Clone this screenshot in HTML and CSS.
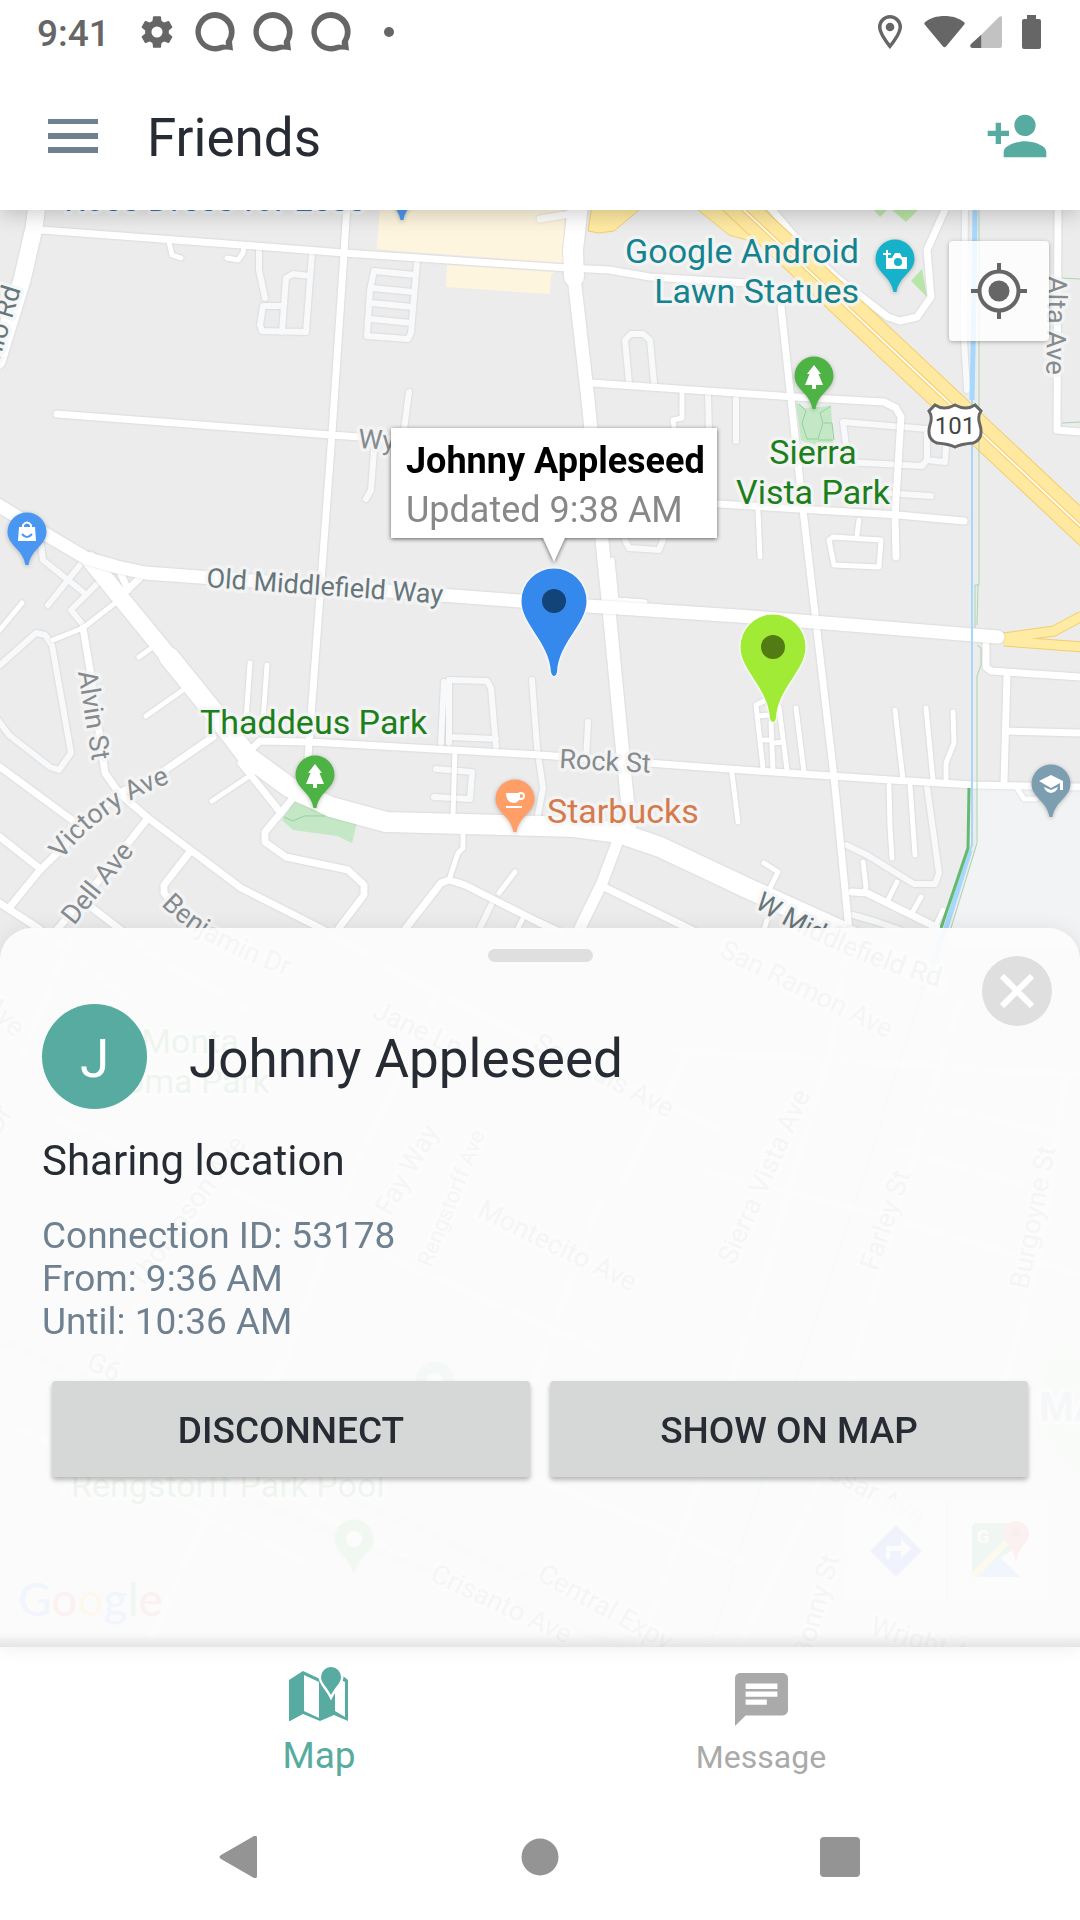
FILE: index.html
```html
<!DOCTYPE html>
<html lang="en">
<head>
<meta charset="utf-8">
<meta name="viewport" content="width=device-width, initial-scale=1">
<title>Friends</title>
<link rel="stylesheet" href="styles.css">
</head>
<body>
<div class="screen">
  <div class="status">
    <span class="clock">9:41</span>
    <svg class="gear" viewBox="0 0 24 24" width="38" height="38"><path d="M19.43 12.98c.04-.32.07-.64.07-.98s-.03-.66-.07-.98l2.11-1.65c.19-.15.24-.42.12-.64l-2-3.46c-.12-.22-.39-.3-.61-.22l-2.49 1c-.52-.4-1.08-.73-1.69-.98l-.38-2.65A.49.49 0 0 0 14 2h-4c-.25 0-.46.18-.49.42l-.38 2.65c-.61.25-1.17.59-1.69.98l-2.49-1c-.23-.09-.49 0-.61.22l-2 3.46c-.13.22-.07.49.12.64l2.11 1.65c-.04.32-.07.65-.07.98s.03.66.07.98l-2.11 1.65c-.19.15-.24.42-.12.64l2 3.46c.12.22.39.3.61.22l2.49-1c.52.4 1.08.73 1.69.98l.38 2.65c.03.24.24.42.49.42h4c.25 0 .46-.18.49-.42l.38-2.65c.61-.25 1.17-.59 1.69-.98l2.49 1c.23.09.49 0 .61-.22l2-3.46c.12-.22.07-.49-.12-.64l-2.11-1.65zM12 15.5a3.5 3.5 0 1 1 0-7 3.5 3.5 0 0 1 0 7z"/></svg>
    <span class="rings">
      <svg viewBox="0 0 40 40" width="40" height="40"><path fill-rule="evenodd" d="M20 0a19.700 19.700 0 1 0 6 38.500q4-2 12 0l-1-9a19.700 19.700 0 0 0-17-29.500zM20 6a14 14 0 0 1 12 21q-2 2-1 6-3-1-6 0A14 14 0 1 1 20 6z"/></svg>
      <svg viewBox="0 0 40 40" width="40" height="40"><path fill-rule="evenodd" d="M20 0a19.700 19.700 0 1 0 6 38.500q4-2 12 0l-1-9a19.700 19.700 0 0 0-17-29.500zM20 6a14 14 0 0 1 12 21q-2 2-1 6-3-1-6 0A14 14 0 1 1 20 6z"/></svg>
      <svg viewBox="0 0 40 40" width="40" height="40"><path fill-rule="evenodd" d="M20 0a19.700 19.700 0 1 0 6 38.500q4-2 12 0l-1-9a19.700 19.700 0 0 0-17-29.500zM20 6a14 14 0 0 1 12 21q-2 2-1 6-3-1-6 0A14 14 0 1 1 20 6z"/></svg>
    </span>
    <svg viewBox="0 0 10 10" width="10" height="10"><circle cx="5" cy="5" r="5"/></svg>
    <span class="signals">
      <svg viewBox="0 0 24 34" width="24" height="34"><path fill-rule="evenodd" d="M12 0A12 12 0 0 0 0 12c0 8 12 22 12 22s12-14 12-22A12 12 0 0 0 12 0zm0 3.500A8.500 8.500 0 0 1 20.500 12c0 5-5 12-8.500 16.500C8.500 24 3.500 17 3.500 12A8.500 8.500 0 0 1 12 3.500z"/><circle cx="12" cy="12" r="4.300"/></svg>
      <svg class="wifi" viewBox="0 0 41 34" width="41" height="34"><path d="M.6 7.500C6 3 13 1 20.500 1s14.500 2 20 6.500q.5 1-.2 2L22 31.500q-1.500 1.500-3 0L.7 9.500q-.7-1-.1-2z"/></svg>
      <svg class="cell" viewBox="0 0 32 32" width="32" height="32"><path fill="#c2c2c2" d="M11 19 28.500 1.500Q32-1 32 2v27q0 3-2 3H11z"/><path d="M11.200 18.800V32H2q-3-1-1-4z"/></svg>
      <svg viewBox="0 0 19 34" width="19" height="34"><path d="M5 0h9v4h3q2 0 2 2v26q0 2-2 2H2q-2 0-2-2V6q0-2 2-2h3z"/></svg>
    </span>
  </div>

  <header class="appbar">
    <button class="icon-button" aria-label="Menu"><svg viewBox="0 0 50 34" width="50" height="34"><path d="M0 0h50v5H0zM0 14h50v6H0zM0 28h50v6H0z"/></svg></button>
    <h1>Friends</h1>
    <button class="icon-button add" aria-label="Add friend"><svg viewBox="0 0 24 24" width="64" height="64"><path d="M15 12a4 4 0 1 0 0-8 4 4 0 0 0 0 8zm-9-2V7H4v3H1v2h3v3h2v-3h3v-2H6zm9 4c-2.670 0-8 1.340-8 4v2h16v-2c0-2.660-5.330-4-8-4z"/></svg></button>
  </header>

  <main class="map">
    <svg class="canvas" viewBox="0 210 1080 1437" preserveAspectRatio="xMidYMid slice">
      <defs>
        <path id="poi" d="M0-19.500A19.500 19.500 0 0 0-19.500 0C-19.500 13-4 17-1.500 33h3C4 17 19.500 13 19.500 0A19.500 19.500 0 0 0 0-19.500z"/>
        <path id="marker" d="M0-32.500A32.500 32.500 0 0 0-32.500 0C-32.500 24-5 40-3 71Q-2 75 0 75T3 71C5 40 32.500 24 32.500 0A32.500 32.500 0 0 0 0-32.500z"/>
        <path id="tree" d="M0-11 7-2H4.500L9 9H2v4h-4V9h-7l4.500-11H-7z"/>
        <path id="victory" d="M62 860Q100 808 170 783"/>
        <path id="benjamin" d="M161 905Q203 949 300 980"/>
        <path id="middlefield" d="M754 907Q838 960 960 993"/>
      </defs>

      <rect class="land" y="200" width="1080" height="1460"/>
      <path fill="#f1f3f4" d="M977 788H1080V950H945L976 850z"/>
      <path class="block" d="M380 205 377 249 411 252 564 263 562 250 565 225 561 205zM447 265 446 287 550 294 551 275 555 272z"/>
      <path class="grass" d="M874 210H887L880 217zM892 210H918L906 222zM911 281 922 269 927 297z"/>
      <path class="park" d="M796 402 805 408 831 406 834 457 801 440zM294 802 357 823 352 843 337 836 293 830 282 820z"/>
      <path class="trail" d="M799 404 806 411 802 423 807 439H818L823 423 820 413 831 406M824 423H832L834 440M818 440H833M284 817 293 821 304 816H325"/>

      <g class="lots">
        <path d="M259 250V270L265 298M312 253 306 332 262 331 260 325 263 306H284M282 332 286 278 293 274 310 276"/>
        <path d="M417 262 411 333 408 339 367 336 370 290 374 271 415 275M372 288 413 292M371 303 413 307M371 319 411 323M409 392 404 430M374 450 371 490 366 499"/>
        <path d="M629 383 625 340 631 334H643L650 340 654 383M708 395 709 430M736 397V441M927 460 922 466 846 462M846 445 843 422 927 429V460L945 462 946 447M884 493 931 496M625 540 629 548 659 550 663 540M965 205 964 340 967 390"/>
        <path d="M41 545 43 560 83 592M84 560 48 605M96 585 71 610 83 625M0 665 36 633 45 635 52 645 71 753 59 770 50 767 9 735-2 720"/>
        <path d="M444 682 441 743M449 743V680L487 681 491 688 496 747M451 737 496 739M436 769 472 772 470 799 434 797M532 680 537 747 543 788 538 815M588 722 586 760M492 903 480 928"/>
        <path d="M927 787 939 873 935 884H914L867 855 846 845M853 915 877 922 900 930"/>
      </g>

      <g class="roads">
        <path class="w5" d="M169 242 172 255 181 258M244 247 243 253 238 260 227 258M682 393V418L673 420 674 428M758 510 760 557M859 520 857 535M833 537 881 540 879 567 834 565 829 540zM612 560 616 600 645 602M22 603-2 632M119 600 83 628 53 640M153 647 139 657M183 690 146 716M248 777 212 801M250 663 246 720M267 665 263 720"/>
        <path class="w5" d="M766 700 756 705 763 768M771 723 773 770M779 707 787 770M796 708 804 772M759 716 769 715M762 740H771M774 743 783 742M895 710 903 780M926 708 933 780M953 712 954 743 946 763V782M889 785 890 827 892 858M910 785 915 855M732 773 738 822M863 862 866 887 864 893M897 882 888 900M921 897 912 913M943 910 936 925M764 863 778 872 769 890M767 920 764 930M1017 788 1024 799H1036M455 750 453 815M463 833V848L458 853 449 880M515 872 499 893M522 920 517 930"/>
        <path class="w7" d="M41 230 255 246 344 253 568 268 609 270 650 277 747 283M347 205 344 253 332 433 308 757M57 414 331 435 521 448M719 504 898 515 964 521M540 219 570 214"/>
        <path class="w7" d="M592 383 795 397 884 402 896 408 901 417 895 515 896 557M781 307 803 510 834 777 850 940M768 205 795 237 836 277 888 317 900 321 917 317 931 297 927 250 947 205M1058 205 1057 430 1080 432"/>
        <path class="w7" d="M245 755 260 741 310 742 540 755 729 769 891 780 974 785 1080 787M986 640V667L991 671 1080 677M1007 675 1004 782M1007 731 1080 733M852 892 867 893 950 934M604 887 700 934M538 922 560 932"/>
        <path class="w7" d="M83 628 90 670 105 773 119 793 148 818 241 888 320 928 420 985 560 1055 720 1130M213 737 155 777 119 793 40 870 9 908M0 767 72 820M0 837 38 867M-2 902 38 928 130 1000M148 818 91 890 55 932M91 907 160 960 250 1010M189 853 164 885V893L200 935M241 763 281 813M293 798 265 832V842L286 857 348 870 364 885V895L339 928M449 880 441 883 406 928M449 880 465 885 540 923M122 595 145 573M118 567 128 590"/>
        <path class="w11" d="M617 843 602 883 580 928"/>
        <path class="w13" d="M574 277 588 400 604 560 609 610 626 787 630 825"/>
        <path class="w17" d="M37 205 34 228 22 280-3 361M90 560 120 597 169 657"/>
        <path class="w20" d="M578 205 573 250 574 277M169 657 220 720 248 757 289 787 331 807 386 822 540 826 574 827 619 833 660 847 747 888 840 930 940 985"/>
      </g>

      <path class="ramp" d="M592 205 588 231 599 233 614 231 645 205zM692 205 729 235 765 245 750 205z"/>
      <path class="ramp-edge" d="M1082 616 1054 631 1004 638M1004 641 1082 647"/>
      <path class="ramp-road" d="M1082 616 1054 631 1004 638M1004 641 1082 647"/>
      <g class="roads"><path class="w13" d="M-2 505 52 538 86 558 117 567 145 573 520 601 588 606 753 617 998 637"/></g>
      <path class="freeway-edge" d="M731 198 1092 537"/>
      <path class="freeway" d="M731 198 1092 537"/>
      <path class="median-edge" d="M731 198 1092 537"/>
      <path class="median" d="M731 198 1092 537"/>

      <path class="creek wide" d="M975 205 974 300 972 400M970 850 946 928 922 990"/>
      <path class="creek" d="M972 400V845L970 850M922 990 871 1153 815 1320 709 1647"/>
      <path class="levee" d="M979 205V585H975V628M978 585 977 625M977 645 981 648V665L977 676V843L951 928M1062 278 1080 279M1062 423 1080 422"/>
      <path class="levee strong" d="M969 788 968 848 941 928"/>

      <g class="faded-roads">
        <path d="M70 940 20 1060M60 1120 350 1240 600 1350M140 1300 60 1500M440 990 350 1180 250 1460M850 930 830 1050 760 1290 700 1480 640 1647M700 1170 860 1210 1000 1250 1080 1275M960 1000 900 1200 820 1480 740 1647M930 1105 1060 1135M900 1150 1040 1190M670 1050 1080 1075M1065 1080 1040 1250 1000 1400M150 1640 280 1360M20 1430 300 1560M260 1480 480 1600M540 1480 740 1560M600 1200 520 1420M690 1050 620 1190"/>
        <path class="railway" d="M0 1340 400 1520 700 1660M250 1500 620 1647"/>
      </g>
      <path fill="#cdeac6" d="M1050 1353H1080V1480L1035 1430z"/>

      <g class="place">
        <text class="shop" x="64" y="211">Ross Dress for Less</text>
        <text class="attraction" x="859" y="263" text-anchor="end">Google Android</text>
        <text class="attraction" x="859" y="303" text-anchor="end">Lawn Statues</text>
        <text class="green" x="813" y="464" text-anchor="middle">Sierra</text>
        <text class="green" x="813" y="504" text-anchor="middle">Vista Park</text>
        <text class="green" x="200" y="734">Thaddeus Park</text>
        <text class="cafe" x="547" y="823">Starbucks</text>
        <text class="green" x="190" y="1053" text-anchor="middle">Monta</text>
        <text class="green" x="188" y="1093" text-anchor="middle">Loma Park</text>
        <text class="green" x="71" y="1497">Rengstorff Park Pool</text>
      </g>
      <g class="street major">
        <text transform="translate(206 587) rotate(4)">Old Middlefield Way</text>
        <text><textPath href="#middlefield">W Middlefield Rd</textPath></text>
        <text transform="translate(21 289) rotate(-73)" text-anchor="end">San Antonio Rd</text>
      </g>
      <g class="street">
        <text transform="translate(358 448) rotate(3)">Wyandotte St</text>
        <text transform="translate(559 768) rotate(3)">Rock St</text>
        <text transform="translate(78 672) rotate(81)">Alvin St</text>
        <text transform="translate(1048 276) rotate(91)">Alta Ave</text>
        <text><textPath href="#victory">Victory Ave</textPath></text>
        <text transform="translate(74 926) rotate(-51)">Dell Ave</text>
        <text><textPath href="#benjamin">Benjamin Dr</textPath></text>
        <text transform="translate(371 1017) rotate(25)">Jane Ln</text>
        <text transform="translate(141 1290) rotate(-54)">Thompson Ave</text>
        <text transform="translate(390 1217) rotate(-60)">Fay Way</text>
        <text class="minor" transform="translate(431 1268) rotate(-68)">Rengstorff Ave</text>
        <text transform="translate(476 1216) rotate(26)">Montecito Ave</text>
        <text transform="translate(668 1118) rotate(27)" text-anchor="end">San Luis Ave</text>
        <text transform="translate(718 956) rotate(26)">San Ramon Ave</text>
        <text transform="translate(734 1266) rotate(-66)">Sierra Vista Ave</text>
        <text transform="translate(877 1272) rotate(-71)">Farley St</text>
        <text transform="translate(1028 1290) rotate(-79)">Burgoyne St</text>
        <text transform="translate(14 1038) rotate(46)" text-anchor="end">Laura Ave</text>
        <text transform="translate(13 1112) rotate(-60)" text-anchor="end">Emmons Dr</text>
        <text transform="translate(85 1368) rotate(25)">G6</text>
        <text transform="translate(429 1580) rotate(25)">Crisanto Ave</text>
        <text transform="translate(536 1579) rotate(29)">Central Expy</text>
        <text transform="translate(918 1526) rotate(28)" text-anchor="end">Vassar Ave</text>
        <text transform="translate(810 1660) rotate(-74)">Bonny St</text>
        <text transform="translate(869 1634) rotate(17)">Wright Ave</text>
        <text class="town" x="1039" y="1421">MA</text>
      </g>

      <g transform="translate(955 426)">
        <path class="shield" d="M-20-21Q-11-15 0-21 11-15 20-21L26-15Q22-9 25-1 29 13 18 17 6 18 0 21-6 18-18 17-29 13-25-1-22-9-26-15z"/>
        <text class="route" y="8" text-anchor="middle">101</text>
      </g>

      <g class="pois">
        <use href="#poi" x="402" y="187" fill="#4a97f2"/>
        <g transform="translate(27 532)"><use href="#poi" fill="#4a97f2"/><path class="glyph" d="M-8-5H8L9 9H-9z"/><path fill="none" stroke="#fff" stroke-width="2" d="M-4-5V-7Q0-12 4-7V-5"/><path fill="none" stroke="#4a97f2" stroke-width="2" d="M-5 2Q0 8 5 2"/></g>
        <g transform="translate(895 259)"><use href="#poi" fill="#16b2c9"/><path class="glyph" d="M-9-1H-3L0-6H5L7-2H12V10H-9zM-9-9h2v3h3v2h-3v3h-2v-3h-3v-2h3z"/><circle cx="3" cy="3" r="4" fill="#16b2c9"/></g>
        <g transform="translate(814 376)"><use href="#poi" fill="#4eb345"/><use class="glyph" href="#tree"/></g>
        <g transform="translate(315 775)"><use href="#poi" fill="#4eb345"/><use class="glyph" href="#tree"/></g>
        <g transform="translate(515 799)"><use href="#poi" fill="#ff9e67"/><path class="glyph" d="M-9-6H5V-2Q4 4-2 4-9 3-9-6zM-9 7H7V9H-9z"/><circle cx="6" cy="-3" r="3" fill="none" stroke="#fff" stroke-width="2"/></g>
        <g transform="translate(1051 784)"><use href="#poi" fill="#7c9eb0"/><path class="glyph" d="M-12-3 0-9 12-3V6H9V-1L0 4zM-7 3 0 6 7 3Q6 8 0 9-6 8-7 3z"/></g>
        <g transform="translate(435 1381)"><use href="#poi" fill="#7fb9a8"/><circle r="8" fill="#fff"/></g>
        <g transform="translate(354 1539)"><use href="#poi" fill="#4eb345"/><circle r="8" fill="#fff"/></g>
      </g>

      <g class="logo"><text x="18" y="1616"><tspan fill="#4285f4">G</tspan><tspan fill="#ea4335">o</tspan><tspan fill="#fbbc05">o</tspan><tspan fill="#4285f4">g</tspan><tspan fill="#34a853">l</tspan><tspan fill="#ea4335">e</tspan></text></g>
      <g>
        <rect x="843" y="1499" width="206" height="101" rx="4" fill="#fff" opacity=".7"/>
        <path stroke="#ddd" stroke-width="2" d="M947 1500V1599"/>
        <path fill="#3f6ff0" d="M896 1525 922 1551 896 1577 870 1551z"/>
        <path fill="#fff" d="M886 1559V1546H901V1539L911 1549 901 1558V1551H890V1559z"/>
        <path fill="#34a853" d="M975 1523H1020V1545L972 1577V1526z"/>
        <path fill="#fbc02d" d="M972 1572 1006 1538 1010 1543 977 1577H972z"/>
        <path fill="#4285f4" d="M977 1577 999 1556 1020 1577z"/>
        <path fill="#ea4335" d="M1016 1521a13 13 0 0 1 13 13c0 8-11 13-13 29-2-16-13-21-13-29a13 13 0 0 1 13-13z"/>
        <circle cx="1016" cy="1533" r="4" fill="#96261d"/>
        <text class="badge" x="977" y="1543">G</text>
      </g>

      <g class="markers">
        <g transform="translate(554 601)"><use href="#marker" fill="#3689ec"/><circle r="12" fill="#124479"/></g>
        <g transform="translate(773 647)"><use href="#marker" fill="#a1eb36"/><circle r="12" fill="#527c13"/></g>
      </g>
      <g class="callout">
        <path d="M391 428H717V538H565L554 562 543 538H391z"/>
        <text class="who" x="406" y="473">Johnny Appleseed</text>
        <text class="when" x="406" y="522">Updated 9:38 AM</text>
      </g>
    </svg>

    <button class="locate" aria-label="My location"><svg viewBox="0 0 56 56" width="56" height="56"><circle cx="28" cy="28" r="19.500" fill="none" stroke="#666" stroke-width="4"/><circle cx="28" cy="28" r="10.500" fill="#666"/><path stroke="#666" stroke-width="4" d="M28 0V9M28 47V56M0 28H9M47 28H56"/></svg></button>

    <section class="sheet">
      <div class="handle"></div>
      <button class="close" aria-label="Close"><svg viewBox="0 0 34 34" width="34" height="34"><path stroke="#fff" stroke-width="6" d="M2 2 32 32M32 2 2 32"/></svg></button>
      <div class="person"><span class="avatar">J</span><h2>Johnny Appleseed</h2></div>
      <p class="state">Sharing location</p>
      <p class="details">Connection ID: 53178<br>From: 9:36 AM<br>Until: 10:36 AM</p>
      <div class="actions"><button>DISCONNECT</button><button>SHOW ON MAP</button></div>
    </section>
  </main>

  <nav class="tabs">
    <a class="tab active" href="#map"><svg viewBox="0 0 60 54" width="60" height="54"><path fill-rule="evenodd" d="M0 13 14 4 31 12 45 5 54 9 59 13V54L45 48 31 54 14 47 1 54H0zM15 8V44L30 51V15zM46 22V44L56 50V15L50 12z"/><path class="drop" d="M42 0A10 10 0 0 1 52 10C52 16 46 20 42 28 38 20 32 16 32 10A10 10 0 0 1 42 0z"/></svg><span>Map</span></a>
    <a class="tab" href="#message"><svg viewBox="2 2 20 20" width="53" height="53"><path d="M20 2H4c-1.100 0-1.990.9-1.990 2L2 22l4-4h14c1.100 0 2-.9 2-2V4c0-1.100-.9-2-2-2zM6 6h12v2H6zm0 3h12v2H6zm8 5H6v-2h8z"/></svg><span>Message</span></a>
  </nav>
  <div class="system">
    <button aria-label="Back"><svg viewBox="0 0 42 42" width="42" height="42"><path d="M35 0q3-1 3 2v38q0 3-3 2L2 23q-3-2 0-4z"/></svg></button>
    <button aria-label="Home"><svg viewBox="0 0 38 38" width="38" height="38"><circle cx="19" cy="19" r="18.500"/></svg></button>
    <button aria-label="Overview"><svg viewBox="0 0 40 40" width="40" height="40"><rect width="40" height="40" rx="4"/></svg></button>
  </div>
</div>
</body>
</html>
```
FILE: styles.css
```css
* { box-sizing: border-box; }

body {
  margin: 0;
  background: #fff;
  color: #272b33;
  font-family: Roboto, "Liberation Sans", sans-serif;
}

h1, h2, p { margin: 0; font-weight: 400; }

button {
  border: 0;
  padding: 0;
  background: none;
  font: inherit;
  color: inherit;
}

svg { display: block; flex: none; }

.screen {
  display: flex;
  flex-direction: column;
  min-height: 100vh;
}

/* Status bar */
.status {
  display: flex;
  align-items: center;
  height: 64px;
  padding: 0 39px 0 37px;
  color: #666;
  fill: #666;
}
.clock { padding-top: 2px; font-size: 37px; font-weight: 500; }
.gear { margin-left: 28px; }
.rings { display: flex; gap: 18px; margin: 0 33px 0 19px; }
.signals { display: flex; align-items: center; margin-left: auto; }
.wifi { margin: 0 5px 0 22px; }
.cell { margin-right: 20px; }

/* App bar */
.appbar {
  display: flex;
  align-items: center;
  height: 146px;
  padding: 0 31px 2px 48px;
  position: relative;
  z-index: 1;
  background: #fff;
  box-shadow: 0 4px 20px rgba(0, 0, 0, .2);
  clip-path: inset(0 0 -30px 0);
}
.appbar h1, .person h2 { padding-top: 4px; font-size: 53px; }
.appbar h1 { margin-left: 49px; }
.icon-button { fill: #6f8190; }
.add { margin-left: auto; fill: #57aba0; }

/* Map */
.map { flex: 1; display: grid; }
.map > * { grid-area: 1 / 1; }
.canvas { width: 100%; height: 100%; }
.land { fill: #ececec; }
.block { fill: #fdf5de; }
.grass { fill: #b9e6a8; }
.park { fill: #c4e8c5; }
.trail { fill: none; stroke: #96cf9d; stroke-width: 1; }
.roads, .lots, .faded-roads {
  fill: none;
  stroke: #fff;
  stroke-linecap: round;
  stroke-linejoin: round;
  filter: drop-shadow(0 0 1px rgba(0, 0, 0, .14));
}
.lots { stroke: #f8f9fb; stroke-width: 6; }
.faded-roads { stroke-width: 7; }
.railway { stroke: #ddd; }
.w5 { stroke-width: 5; }
.w7 { stroke-width: 7; }
.w11 { stroke-width: 11; }
.w13 { stroke-width: 13; }
.w17 { stroke-width: 17; }
.w20 { stroke-width: 20; }
.ramp { fill: #ffeba3; stroke: #f3cd6c; }
.ramp-edge, .ramp-road, .freeway, .freeway-edge, .median, .median-edge { fill: none; }
.ramp-edge { stroke: #f3cd6c; stroke-width: 11; stroke-linejoin: round; }
.ramp-road { stroke: #ffeba3; stroke-width: 9; stroke-linejoin: round; }
.freeway-edge { stroke: #f3cd6c; stroke-width: 30; }
.freeway { stroke: #ffe9a0; stroke-width: 28; }
.median-edge { stroke: #f3cd6c; stroke-width: 4; }
.median { stroke: #fffbef; stroke-width: 2; }
.creek { fill: none; stroke: #a6d8fd; stroke-width: 2; }
.wide { stroke-width: 5; }
.levee { fill: none; stroke: #a9d5b0; stroke-width: 1; }
.strong { stroke: #63ba70; stroke-width: 3; }

.place text, .street text {
  paint-order: stroke;
  stroke: rgba(245, 245, 245, .8);
  stroke-width: 7px;
  stroke-linejoin: round;
}
.place { font-size: 34px; }
.shop { fill: #2f6fcf; }
.attraction { fill: #12838f; }
.green { fill: #1b7f1b; }
.cafe { fill: #d57a4b; }
.street { font-size: 27px; fill: #858b8f; }
.major { fill: #66767b; }
.street .minor { font-size: 22px; }
.street .town { font-size: 40px; font-weight: 700; fill: #8fa3b5; }
.shield { fill: #fff; stroke: #666; stroke-width: 3; }
.route { font-size: 24px; fill: #444; }
.pois { filter: drop-shadow(0 1px 2px rgba(0, 0, 0, .25)); }
.glyph { fill: #fff; }
.logo { font: 500 46px Lato, "Liberation Sans", sans-serif; }
.badge { font-size: 18px; font-weight: 700; fill: #fff; }
.markers { filter: drop-shadow(0 0 1px #fff) drop-shadow(0 0 1px #fff); }
.callout path { fill: #fff; filter: drop-shadow(0 1px 2px rgba(0, 0, 0, .6)); }
.callout text { font-size: 36px; }
.who { font-weight: 700; fill: #000; }
.when { fill: #888; }

.locate {
  justify-self: end;
  align-self: start;
  display: grid;
  place-items: center;
  width: 100px;
  height: 100px;
  margin: 31px 31px 0 0;
  border-radius: 4px;
  background: rgba(255, 255, 255, .82);
  box-shadow: 0 1px 4px rgba(0, 0, 0, .3);
}

/* Details sheet */
.sheet {
  position: relative;
  align-self: end;
  padding: 21px 42px 170px;
  border-radius: 32px 32px 0 0;
  background:
    linear-gradient(to top, rgba(0, 0, 0, .09), rgba(0, 0, 0, 0) 14px),
    rgba(252, 252, 252, .94);
  box-shadow: 0 0 20px rgba(0, 0, 0, .08);
}
.handle {
  width: 105px;
  height: 13px;
  margin: 0 auto;
  border-radius: 7px;
  background: #dfdfdf;
}
.close {
  position: absolute;
  top: 28px;
  right: 28px;
  display: grid;
  place-items: center;
  width: 70px;
  height: 70px;
  border-radius: 50%;
  background: #dfdfdf;
}
.person { display: flex; align-items: center; gap: 42px; margin-top: 42px; }
.avatar {
  display: grid;
  place-items: center;
  width: 105px;
  height: 105px;
  padding-top: 4px;
  border-radius: 50%;
  background: #57aba0;
  color: #fff;
  font-size: 53px;
}
.state { margin-top: 27px; font-size: 42px; line-height: 50px; }
.details { margin-top: 28px; font-size: 37px; line-height: 43px; color: #6f8190; }
.actions { display: flex; gap: 20px; margin: 38px 10px 0; }
.actions button {
  flex: 1;
  height: 96px;
  padding-top: 2px;
  border-radius: 4px;
  background: #d6d8d7;
  box-shadow: 0 3px 5px rgba(0, 0, 0, .28);
  font-size: 37px;
  font-weight: 500;
}

/* Tab bar */
.tabs { display: flex; height: 147px; padding: 0 98px; background: #fff; }
.tab {
  flex: 1;
  display: flex;
  flex-direction: column;
  align-items: center;
  justify-content: flex-end;
  gap: 10px;
  padding-bottom: 16px;
  color: #aaa;
  fill: #aaa;
  font-size: 32px;
  line-height: 42px;
  text-decoration: none;
}
.active { gap: 14px; padding-bottom: 17px; color: #57aba0; fill: #57aba0; font-size: 37px; }
.drop { paint-order: stroke; stroke: #fff; stroke-width: 5px; }

/* System navigation */
.system {
  display: grid;
  grid-template-columns: repeat(3, 1fr);
  place-items: center;
  height: 126px;
  padding: 0 90px;
  fill: #949494;
}
```
